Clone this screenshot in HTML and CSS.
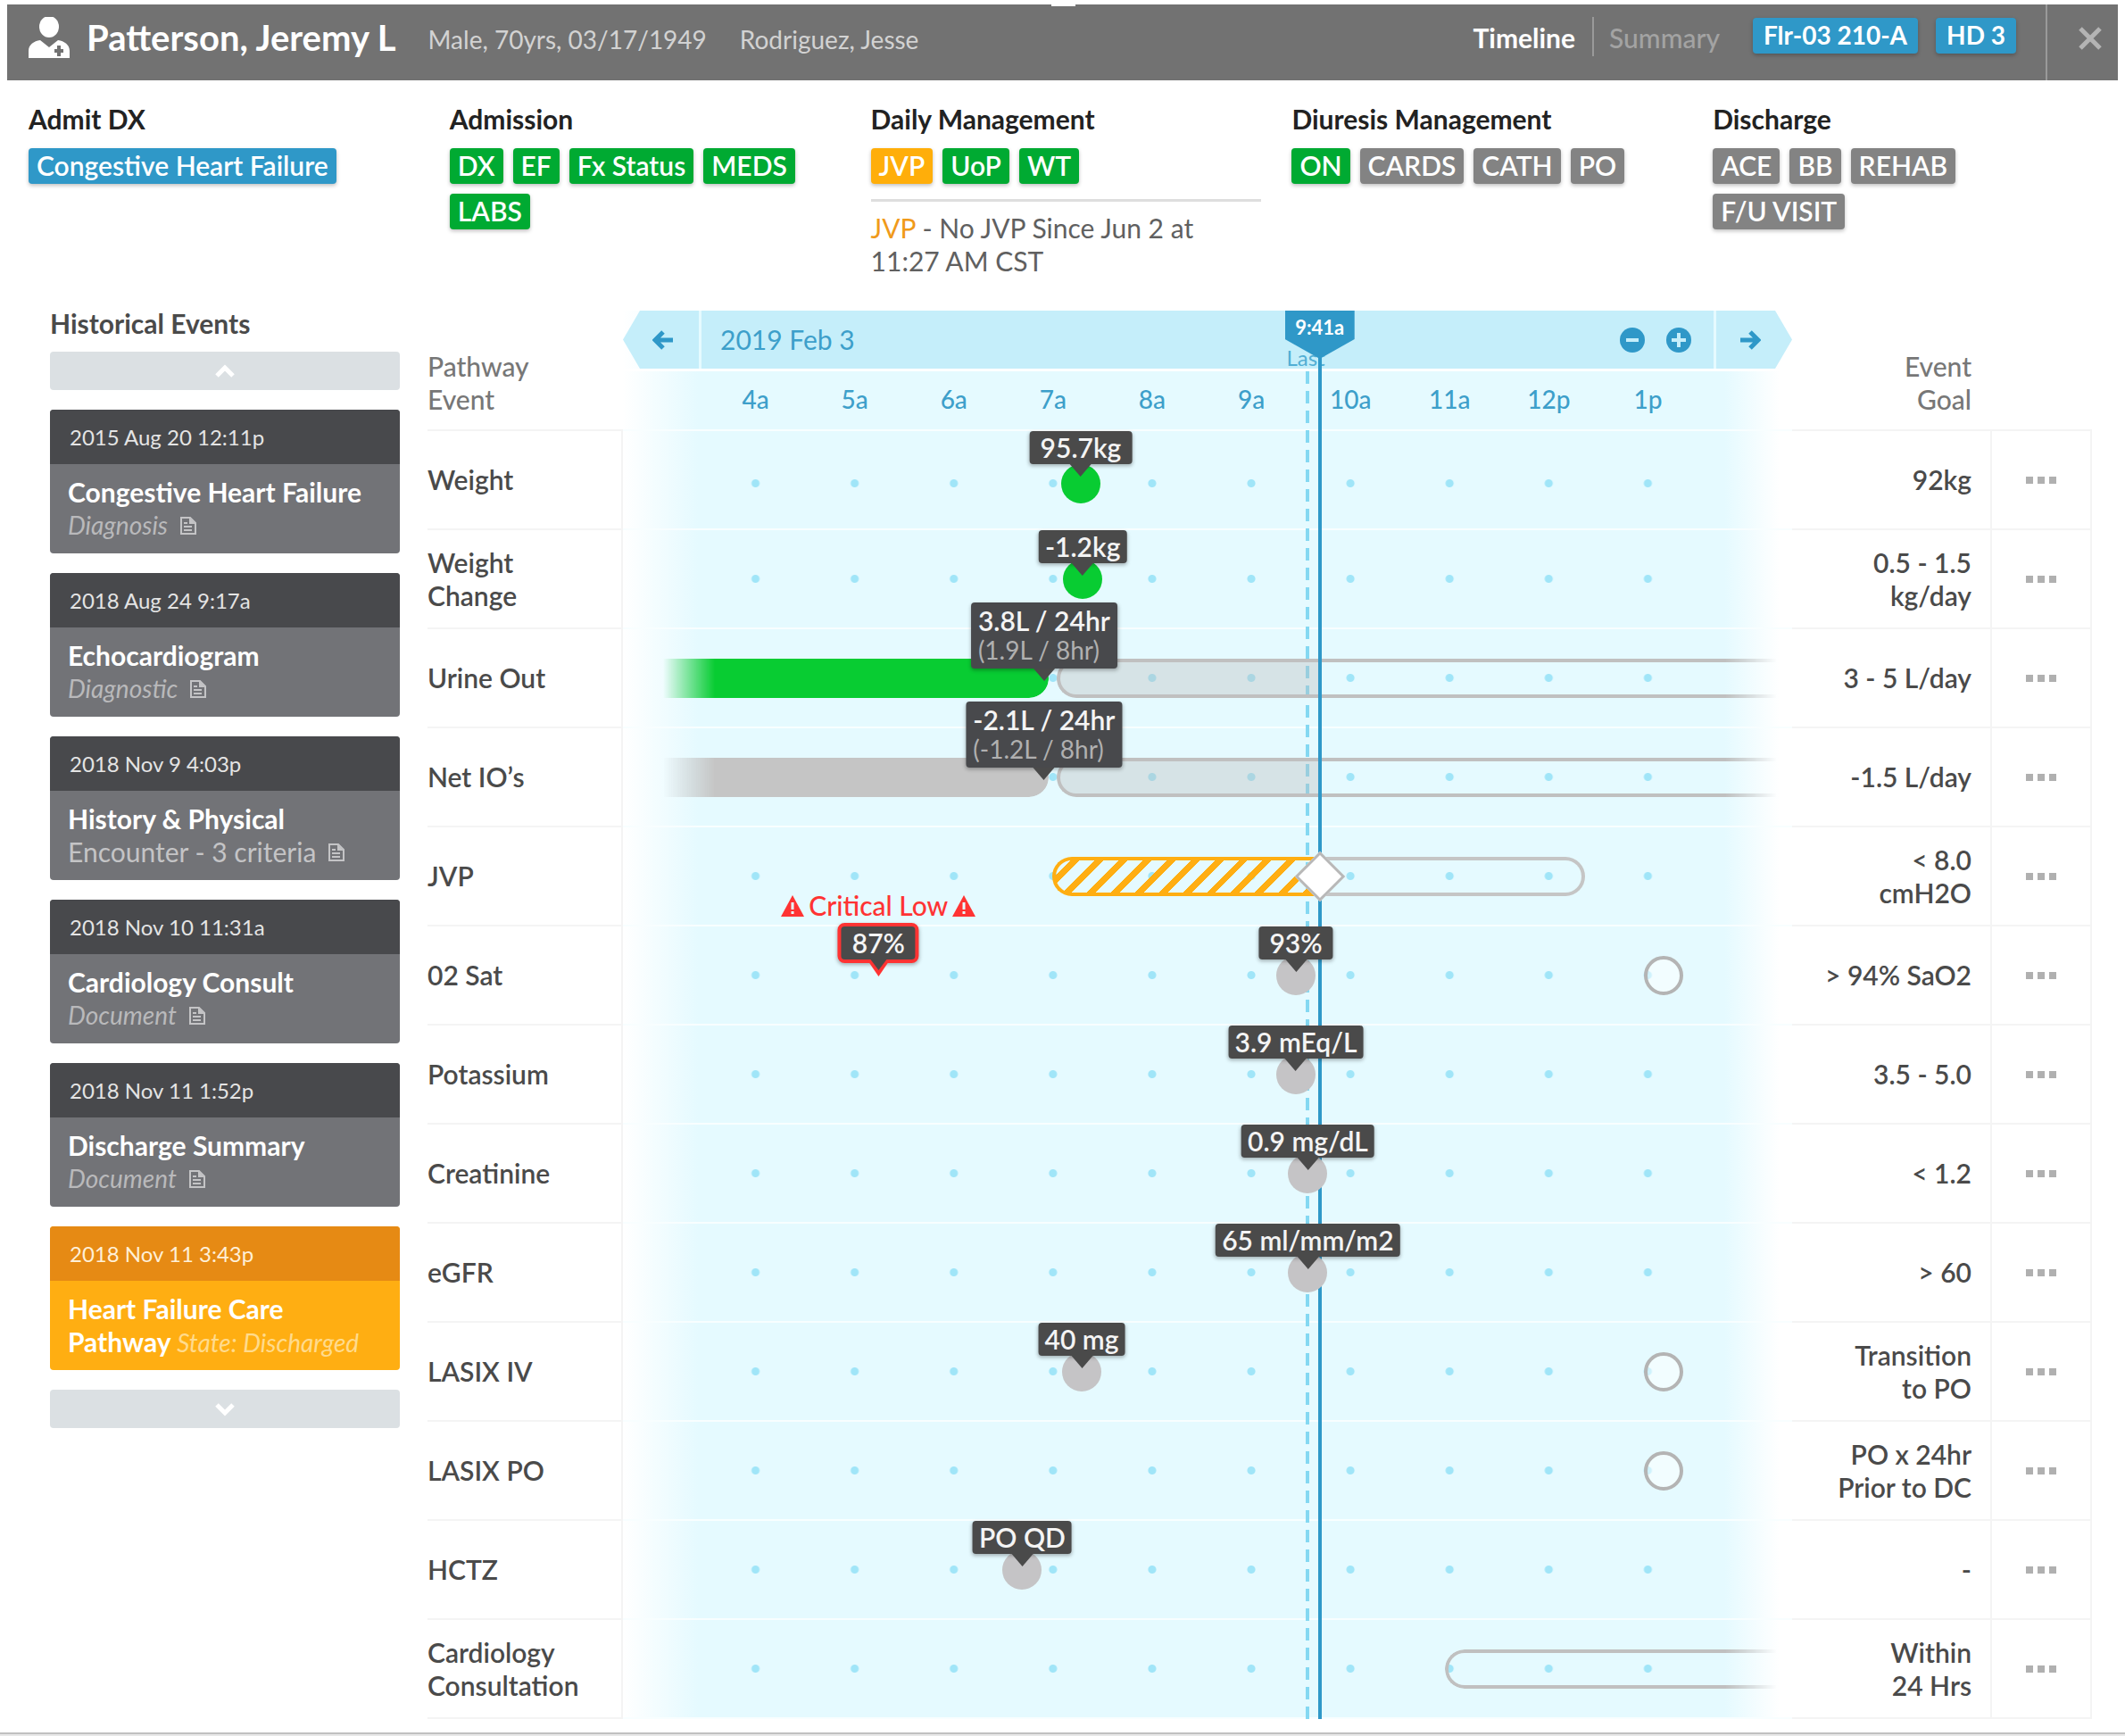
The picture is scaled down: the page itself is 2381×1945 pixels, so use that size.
FILE: index.html
```html
<!DOCTYPE html>
<html lang="en">
<head>
<meta charset="utf-8">
<meta name="viewport" content="width=device-width, initial-scale=1">
<title>Patterson, Jeremy L – Timeline</title>
<link rel="stylesheet" href="styles.css">
</head>
<body>
<svg class="sprite" aria-hidden="true">
  <symbol id="i-doc" viewBox="0 0 20 22"><path d="M2 2h10l6 6v12H2z" fill="none" stroke="currentColor" stroke-width="2"/><path d="M11 2v7h7z" fill="currentColor"/><path d="M5 8h4M5 12h9M5 16h9" fill="none" stroke="currentColor" stroke-width="2"/></symbol>
  <symbol id="i-warn" viewBox="0 0 26 24"><path d="M13 0l13 24H0z" fill="currentColor"/><path d="M13 8v8M13 18v3" stroke="#e5faff" stroke-width="3"/></symbol>
  <symbol id="i-arrow" viewBox="0 0 24 24"><path d="M1 12h18M12 3l9 9-9 9" fill="none" stroke="currentColor" stroke-width="5"/></symbol>
  <symbol id="i-chev" viewBox="0 0 22 16"><path d="M2 13l9-9 9 9" fill="none" stroke="currentColor" stroke-width="5"/></symbol>
  <symbol id="i-more" viewBox="0 0 34 8"><path d="M0 0h8v8H0zM13 0h8v8h-8zM26 0h8v8h-8z" fill="currentColor"/></symbol>
</svg>

<header class="topbar">
  <svg class="avatar" viewBox="0 0 46 46" aria-hidden="true"><ellipse cx="23" cy="11" rx="11" ry="12" fill="#fff"/><path d="M0 46V38C0 31 6 27 13 26l10 8 10-8c7 1 13 5 13 12v8z" fill="#fff"/><path d="M34 32v12M29 38h10" stroke="#727272" stroke-width="4"/></svg>
  <h1 class="name">Patterson, Jeremy L</h1>
  <p class="meta">Male, 70yrs, 03/17/1949</p>
  <p class="meta">Rodriguez, Jesse</p>
  <nav class="tabs">
    <a class="tab tab-on" href="#timeline">Timeline</a>
    <a class="tab" href="#summary">Summary</a>
  </nav>
  <span class="badge blue">Flr-03 210-A</span>
  <span class="badge blue">HD 3</span>
  <button class="close" type="button" aria-label="Close"><svg viewBox="0 0 26 26" width="26" height="26"><path d="M2 2l22 22M24 2L2 24" stroke="currentColor" stroke-width="5"/></svg></button>
</header>

<section class="stages">
  <div class="stage"><h2>Admit DX</h2><div class="badges"><span class="badge blue">Congestive Heart Failure</span></div></div>
  <div class="stage"><h2>Admission</h2><div class="badges"><span class="badge green">DX</span><span class="badge green">EF</span><span class="badge green">Fx Status</span><span class="badge green">MEDS</span><span class="badge green">LABS</span></div></div>
  <div class="stage"><h2>Daily Management</h2><div class="badges"><span class="badge amber">JVP</span><span class="badge green">UoP</span><span class="badge green">WT</span></div>
    <p class="note"><span class="note-key">JVP</span> - No JVP Since Jun 2 at 11:27 AM CST</p></div>
  <div class="stage"><h2>Diuresis Management</h2><div class="badges"><span class="badge green">ON</span><span class="badge gray">CARDS</span><span class="badge gray">CATH</span><span class="badge gray">PO</span></div></div>
  <div class="stage"><h2>Discharge</h2><div class="badges"><span class="badge gray">ACE</span><span class="badge gray">BB</span><span class="badge gray">REHAB</span><span class="badge gray">F/U VISIT</span></div></div>
</section>

<main class="main">
  <aside class="history">
    <h2>Historical Events</h2>
    <button class="scroll" type="button" aria-label="Earlier events"><svg width="22" height="16"><use href="#i-chev"/></svg></button>
    <article class="event"><time>2015 Aug 20 12:11p</time><div class="event-body"><h3>Congestive Heart Failure</h3><p><em>Diagnosis</em><svg class="doc"><use href="#i-doc"/></svg></p></div></article>
    <article class="event"><time>2018 Aug 24 9:17a</time><div class="event-body"><h3>Echocardiogram</h3><p><em>Diagnostic</em><svg class="doc"><use href="#i-doc"/></svg></p></div></article>
    <article class="event"><time>2018 Nov 9 4:03p</time><div class="event-body"><h3>History &amp; Physical</h3><p>Encounter - 3 criteria<svg class="doc"><use href="#i-doc"/></svg></p></div></article>
    <article class="event"><time>2018 Nov 10 11:31a</time><div class="event-body"><h3>Cardiology Consult</h3><p><em>Document</em><svg class="doc"><use href="#i-doc"/></svg></p></div></article>
    <article class="event"><time>2018 Nov 11 1:52p</time><div class="event-body"><h3>Discharge Summary</h3><p><em>Document</em><svg class="doc"><use href="#i-doc"/></svg></p></div></article>
    <article class="event event-on"><time>2018 Nov 11 3:43p</time><div class="event-body"><h3>Heart Failure Care Pathway <em>State: Discharged</em></h3></div></article>
    <button class="scroll scroll-down" type="button" aria-label="Later events"><svg width="22" height="16"><use href="#i-chev"/></svg></button>
  </aside>

  <section class="timeline" id="timeline">
    <table>
      <colgroup><col class="c-name"><col><col class="c-goal"><col class="c-more"></colgroup>
      <thead>
        <tr>
          <th class="name-cell" scope="col">Pathway<br>Event</th>
          <th class="chart head" scope="col">
            <div class="range">
              <button class="step prev" type="button" aria-label="Earlier"><svg width="24" height="24"><use href="#i-arrow"/></svg></button>
              <div class="range-mid"><span>2019 Feb 3</span>
                <button class="zoom" type="button" aria-label="Zoom out"><svg viewBox="0 0 28 28" width="28" height="28"><circle cx="14" cy="14" r="14" fill="currentColor"/><path d="M7 14h14" stroke="#c5eefa" stroke-width="4"/></svg></button>
                <button class="zoom" type="button" aria-label="Zoom in"><svg viewBox="0 0 28 28" width="28" height="28"><circle cx="14" cy="14" r="14" fill="currentColor"/><path d="M6 14h16M14 6v16" stroke="#c5eefa" stroke-width="4"/></svg></button>
              </div>
              <button class="step next" type="button" aria-label="Later"><svg width="24" height="24"><use href="#i-arrow"/></svg></button>
            </div>
            <div class="hours"><span>4a</span><span>5a</span><span>6a</span><span>7a</span><span>8a</span><span>9a</span><span>10a</span><span>11a</span><span>12p</span><span>1p</span></div>
          </th>
          <th class="goal-cell" scope="col">Event<br>Goal</th>
          <td class="more-head"></td>
        </tr>
      </thead>
      <tbody>
        <tr><th class="name-cell" scope="row">Weight</th>
          <td class="chart"><div class="lane lane-first"><i class="dot ok" style="left:37.8%"></i><span class="tip wide" style="left:37.8%">95.7kg</span></div></td>
          <td class="goal-cell">92kg</td><td class="more-cell"><button class="more" type="button" aria-label="More"><svg width="34" height="8"><use href="#i-more"/></svg></button></td></tr>
        <tr><th class="name-cell" scope="row">Weight<br>Change</th>
          <td class="chart"><div class="lane"><i class="dot ok" style="left:38%"></i><span class="tip" style="left:38%">-1.2kg</span></div></td>
          <td class="goal-cell">0.5 - 1.5<br>kg/day</td><td class="more-cell"><button class="more" type="button" aria-label="More"><svg width="34" height="8"><use href="#i-more"/></svg></button></td></tr>
        <tr><th class="name-cell" scope="row">Urine Out</th>
          <td class="chart"><div class="lane"><i class="bar done ok" style="left:-4.3%;width:38.9%"></i><i class="bar filled" style="left:35.4%;width:26.5%"></i><i class="bar open" style="left:35.4%;width:72.6%"></i><span class="tip two" style="left:34.1%">3.8L / 24hr<small>(1.9L / 8hr)</small></span></div></td>
          <td class="goal-cell">3 - 5 L/day</td><td class="more-cell"><button class="more" type="button" aria-label="More"><svg width="34" height="8"><use href="#i-more"/></svg></button></td></tr>
        <tr><th class="name-cell" scope="row">Net IO’s</th>
          <td class="chart"><div class="lane"><i class="bar done" style="left:-4.3%;width:38.9%"></i><i class="bar filled" style="left:35.4%;width:26.5%"></i><i class="bar open" style="left:35.4%;width:72.6%"></i><span class="tip two" style="left:34.1%">-2.1L / 24hr<small>(-1.2L / 8hr)</small></span></div></td>
          <td class="goal-cell">-1.5 L/day</td><td class="more-cell"><button class="more" type="button" aria-label="More"><svg width="34" height="8"><use href="#i-more"/></svg></button></td></tr>
        <tr><th class="name-cell" scope="row">JVP</th>
          <td class="chart"><div class="lane"><i class="bar planned" style="left:61.9%;width:26.8%"></i><i class="bar striped" style="left:34.9%;width:27%"></i><i class="diamond" style="left:61.9%"></i></div></td>
          <td class="goal-cell">&lt; 8.0<br>cmH2O</td><td class="more-cell"><button class="more" type="button" aria-label="More"><svg width="34" height="8"><use href="#i-more"/></svg></button></td></tr>
        <tr><th class="name-cell" scope="row">02 Sat</th>
          <td class="chart"><div class="lane"><span class="alert" style="left:17.4%"><svg width="26" height="24"><use href="#i-warn"/></svg>Critical Low<svg width="26" height="24"><use href="#i-warn"/></svg></span><span class="tip critical" style="left:17.4%">87%</span><i class="dot" style="left:59.5%"></i><span class="tip wide" style="left:59.5%">93%</span><i class="ring" style="left:96.6%"></i></div></td>
          <td class="goal-cell">&gt; 94% SaO2</td><td class="more-cell"><button class="more" type="button" aria-label="More"><svg width="34" height="8"><use href="#i-more"/></svg></button></td></tr>
        <tr><th class="name-cell" scope="row">Potassium</th>
          <td class="chart"><div class="lane"><i class="dot" style="left:59.5%"></i><span class="tip" style="left:59.5%">3.9 mEq/L</span></div></td>
          <td class="goal-cell">3.5 - 5.0</td><td class="more-cell"><button class="more" type="button" aria-label="More"><svg width="34" height="8"><use href="#i-more"/></svg></button></td></tr>
        <tr><th class="name-cell" scope="row">Creatinine</th>
          <td class="chart"><div class="lane"><i class="dot" style="left:60.7%"></i><span class="tip" style="left:60.7%">0.9 mg/dL</span></div></td>
          <td class="goal-cell">&lt; 1.2</td><td class="more-cell"><button class="more" type="button" aria-label="More"><svg width="34" height="8"><use href="#i-more"/></svg></button></td></tr>
        <tr><th class="name-cell" scope="row">eGFR</th>
          <td class="chart"><div class="lane"><i class="dot" style="left:60.7%"></i><span class="tip" style="left:60.7%">65 ml/mm/m2</span></div></td>
          <td class="goal-cell">&gt; 60</td><td class="more-cell"><button class="more" type="button" aria-label="More"><svg width="34" height="8"><use href="#i-more"/></svg></button></td></tr>
        <tr><th class="name-cell" scope="row">LASIX IV</th>
          <td class="chart"><div class="lane"><i class="dot" style="left:37.9%"></i><span class="tip" style="left:37.9%">40 mg</span><i class="ring" style="left:96.6%"></i></div></td>
          <td class="goal-cell">Transition<br>to PO</td><td class="more-cell"><button class="more" type="button" aria-label="More"><svg width="34" height="8"><use href="#i-more"/></svg></button></td></tr>
        <tr><th class="name-cell" scope="row">LASIX PO</th>
          <td class="chart"><div class="lane"><i class="ring" style="left:96.6%"></i></div></td>
          <td class="goal-cell">PO x 24hr<br>Prior to DC</td><td class="more-cell"><button class="more" type="button" aria-label="More"><svg width="34" height="8"><use href="#i-more"/></svg></button></td></tr>
        <tr><th class="name-cell" scope="row">HCTZ</th>
          <td class="chart"><div class="lane"><i class="dot" style="left:31.9%"></i><span class="tip" style="left:31.9%">PO QD</span></div></td>
          <td class="goal-cell">-</td><td class="more-cell"><button class="more" type="button" aria-label="More"><svg width="34" height="8"><use href="#i-more"/></svg></button></td></tr>
        <tr><th class="name-cell" scope="row">Cardiology<br>Consultation</th>
          <td class="chart"><div class="lane"><i class="bar open" style="left:74.5%;width:33.5%"></i></div></td>
          <td class="goal-cell">Within<br>24 Hrs</td><td class="more-cell"><button class="more" type="button" aria-label="More"><svg width="34" height="8"><use href="#i-more"/></svg></button></td></tr>
      </tbody>
    </table>
    <div class="cursor cursor-last"><i class="last-line" style="left:60.7%"></i><span class="last-label" style="left:60.7%">Last</span></div>
    <div class="cursor cursor-now"><i class="now-line" style="left:61.9%"></i><span class="now-flag" style="left:61.9%">9:41a</span></div>
  </section>
</main>
<footer class="foot"></footer>
</body>
</html>
```
FILE: styles.css
```css
* { box-sizing: border-box; }
body { margin: 0; background: #fff; color: #4a4a4a; font: 500 30px/37px Lato, "Open Sans", sans-serif; }
h1, h2, h3, p { margin: 0; }
button { margin: 0; padding: 0; border: 0; background: none; color: inherit; font: inherit; cursor: pointer; }
svg { display: block; }
.sprite { position: absolute; width: 0; height: 0; }

/* Patient bar */
.topbar { position: relative; display: flex; align-items: flex-start; height: 85px; margin: 5px 8px 0; padding-left: 24px; background: #727272; color: #d2d2d2; }
.topbar::before { content: ""; position: absolute; top: 0; left: 50%; width: 27px; height: 2px; margin-left: -13px; background: #fff; }
.avatar { width: 46px; height: 46px; margin: 14px 19px 0 0; }
.name { margin: 14px 36px 0 0; color: #fff; font-size: 40px; line-height: 46px; font-weight: 700; }
.meta { margin: 21px 37px 0 0; font-size: 28px; font-weight: 400; }
.tabs { display: flex; margin: 14px 37px 0 auto; }
.tab { padding: 5px 0 2px 17px; color: #a3a3a3; text-decoration: none; }
.tab-on { padding: 5px 19px 2px 0; border-right: 2px solid #9a9a9a; color: #fff; font-weight: 700; }
.topbar .badge { margin: 15px 20px 0 0; padding: 0 12px; font-size: 28px; font-weight: 700; }
.close { display: grid; place-items: center; align-self: stretch; width: 81px; margin-left: 13px; padding: 0 0 10px 17px; border-left: 2px solid #9a9a9a; color: #b4b4b4; }

.badge { height: 40px; padding: 0 9px; border-radius: 4px; color: #fff; font-weight: 600; line-height: 39px; white-space: nowrap; box-shadow: 0 2px 4px rgba(0, 0, 0, .25); }
.blue { background: #2f98c8; }
.green { background: #00aa32; }
.amber { background: #ffae0a; }
.gray { background: #838383; }

/* Care stages */
.stages { display: grid; grid-template-columns: repeat(5, 1fr); height: 234px; padding: 25px 0 0 32px; margin-right: -10px; }
.stage h2 { margin-bottom: 14px; color: #222; font-size: 30px; font-weight: 700; }
.stage { padding-right: 34px; }
.badges { display: flex; flex-wrap: wrap; gap: 11px; padding-right: 24px; }
.note { margin-top: 17px; padding-top: 11px; border-top: 3px solid #dedede; color: #606060; font-weight: 400; }
.note-key { color: #f09a1a; }

/* Historical events */
.main { display: flex; gap: 31px; padding: 0 37px 0 56px; }
.history { flex: 0 0 392px; padding-top: 20px; }
.history h2 { margin-bottom: 13px; font-size: 30px; font-weight: 700; }
.scroll { display: grid; place-items: center; width: 100%; height: 43px; margin-bottom: 22px; border-radius: 4px; background: #dbe0e3; color: #fff; }
.scroll-down svg { transform: rotate(180deg); }
.event { height: 161px; margin-bottom: 22px; border-radius: 4px; background: #727377; color: #c4c4c6; overflow: hidden; }
.event time { display: block; height: 61px; padding-left: 22px; background: #48494c; color: #e4e4e4; font-size: 24px; line-height: 61px; font-weight: 400; }
.event-body { padding: 13px 16px 0 20px; }
.event h3 { color: #fff; font-size: 30px; font-weight: 700; }
.event p { display: flex; align-items: center; font-weight: 400; }
.event em { color: #b9b9bb; font-size: 28px; font-weight: 400; }
.doc { width: 20px; height: 22px; margin-left: 13px; }
.event-on { background: #ffae12; }
.event-on time { background: #e68a14; color: #fff0d8; }
.event-on em { color: #ffdb8d; }

/* Timeline table */
.timeline { position: relative; z-index: 0; flex: 1; min-width: 0; padding-top: 24px; }
table { width: 100%; border-spacing: 0; table-layout: fixed; }
th, td { height: 111px; padding: 0; font-weight: 600; text-align: left; }
thead th, thead td { height: 135px; }
.c-name { width: 219px; }
.c-goal { width: 222px; }
.c-more { width: 114px; }
.name-cell, .goal-cell, .more-cell, .more-head { border-bottom: 2px solid #f4f4f4; }
tbody .name-cell { border-right: 2px solid #f4f4f4; }
thead .name-cell, thead .goal-cell { padding-top: 28px; color: #777; font-weight: 500; }
.goal-cell { padding-right: 21px; text-align: right; }
.more-cell { border-left: 2px solid #f4f4f4; border-right: 2px solid #f4f4f4; }
.more { display: block; width: 34px; margin: 0 auto; color: #b0b0b0; }

.chart { padding: 0; border-bottom: 2px solid #f8feff; background: linear-gradient(to right, #fff 0, #e5faff 84px, #e5faff calc(100% - 76px), #fff calc(100% - 14px)); }
.head { vertical-align: top; }
.range { display: flex; gap: 3px; height: 68px; border-bottom: 3px solid #fff; color: #2f98c8; }
.step { display: grid; place-items: center; flex: 0 0 85px; background: #c5eefa; }
.prev { clip-path: polygon(0 50%, 19px 0, 100% 0, 100% 100%, 19px 100%); padding-left: 4px; }
.prev svg { transform: rotate(180deg); }
.next { clip-path: polygon(0 0, calc(100% - 19px) 0, 100% 50%, calc(100% - 19px) 100%, 0 100%); padding-right: 10px; }
.range-mid { display: flex; align-items: center; gap: 24px; flex: 1; padding: 0 25px 0 21px; background: #c5eefa; font-weight: 400; }
.range-mid span { flex: 1; color: #3d9fca; }
.hours { display: grid; grid-template-columns: repeat(10, 1fr); padding: 13px 106px 0 93px; color: #3d9fca; font-size: 28px; font-weight: 500; text-align: center; }

/* One lane per row: ten hour columns, a dot in the middle of each */
.lane { position: relative; height: 109px; margin: 0 106px 0 93px; background: radial-gradient(circle, #a0e5f8 4px, transparent 5px) 0 0 / 10% 100%; }
.lane-first { background-position: 0 4px; }
.dot, .ring, .diamond { position: absolute; z-index: 4; top: 33px; width: 44px; height: 44px; margin-left: -22px; border-radius: 50%; background: #c5c4c6; }
.lane-first .dot { top: 37px; }
.dot.ok, .bar.ok { background: #08cc32; }
.ring { border: 4px solid #b4b4b4; background: rgba(255, 255, 255, .5); }
.diamond { top: 35px; width: 40px; height: 40px; margin-left: -20px; border: 3px solid #b8b8b8; border-radius: 0; background: #fff; transform: rotate(45deg); }

.tip { position: absolute; z-index: 5; top: 0; height: 37px; padding: 0 7px; transform: translateX(-50%); border-radius: 4px; background: #4a4a4a; color: #f4f4f4; line-height: 36px; white-space: nowrap; box-shadow: 0 2px 4px rgba(0, 0, 0, .3); }
.tip::after { content: ""; position: absolute; top: 100%; left: 50%; margin-left: -12px; border: 12px solid transparent; border-top: 14px solid #4a4a4a; border-bottom: 0; }
.wide { padding: 0 12px; }
.two { top: -30px; height: 74px; padding: 4px 8px; line-height: 33px; background: #48494c; }
.two small { display: block; color: #b0b0b0; font-size: 28px; font-weight: 400; }
.critical { top: -4px; height: 45px; padding: 0 12px; border: 4px solid #ff3333; border-radius: 8px; }
.critical::before { content: ""; position: absolute; top: 100%; left: 50%; margin-left: -13px; border: 13px solid transparent; border-top: 19px solid #ff3333; border-bottom: 0; }
.critical::after { margin-left: -9px; border-width: 12px 9px 0; }
.alert { position: absolute; z-index: 5; top: -42px; display: flex; align-items: center; gap: 5px; transform: translateX(-50%); color: #ff3333; font-weight: 500; white-space: nowrap; }

.bar { position: absolute; z-index: 2; top: 33px; height: 44px; }
.done { border-radius: 0 22px 22px 0; background: #c5c5c5; -webkit-mask: linear-gradient(to right, transparent, #000 58px); mask: linear-gradient(to right, transparent, #000 58px); }
.filled { border-radius: 22px 0 0 22px; background: rgba(190, 190, 190, .38); }
.open { border: 4px solid #c0c0c0; border-right: 0; border-radius: 22px 0 0 22px; -webkit-mask: linear-gradient(to left, transparent, #000 58px); mask: linear-gradient(to left, transparent, #000 58px); }
.planned { border: 4px solid #c5c5c5; border-left: 0; border-radius: 0 22px 22px 0; }
.striped { border: 4px solid #ffae12; border-right: 0; border-radius: 22px 0 0 22px; background: repeating-linear-gradient(135deg, transparent 0 12px, #ffae12 12px 19px); }

/* Vertical time cursors share the lanes' insets */
.cursor { position: absolute; top: 24px; bottom: 0; left: 312px; right: 442px; pointer-events: none; }
.cursor-last { z-index: 1; }
.cursor-now { z-index: 3; }
.last-line { position: absolute; top: 68px; bottom: 0; width: 4px; margin-left: -2px; background: repeating-linear-gradient(to bottom, #84d8f2 0 14px, transparent 14px 22px); }
.last-label { position: absolute; top: 34px; margin-left: -24px; color: #52aed4; font-size: 24px; font-weight: 400; }
.now-line { position: absolute; top: 48px; bottom: 0; width: 4px; margin-left: -2px; background: #2f98c8; }
.now-flag { position: absolute; top: 0; width: 78px; height: 54px; margin-left: -39px; background: #2f98c8; clip-path: polygon(0 0, 100% 0, 100% 32px, 50% 100%, 0 32px); color: #fff; font-size: 22px; line-height: 37px; font-weight: 700; text-align: center; }

.foot { height: 4px; margin-top: 15px; border-top: 2px solid #c0c0c0; background: #e8e8e8; }
```
